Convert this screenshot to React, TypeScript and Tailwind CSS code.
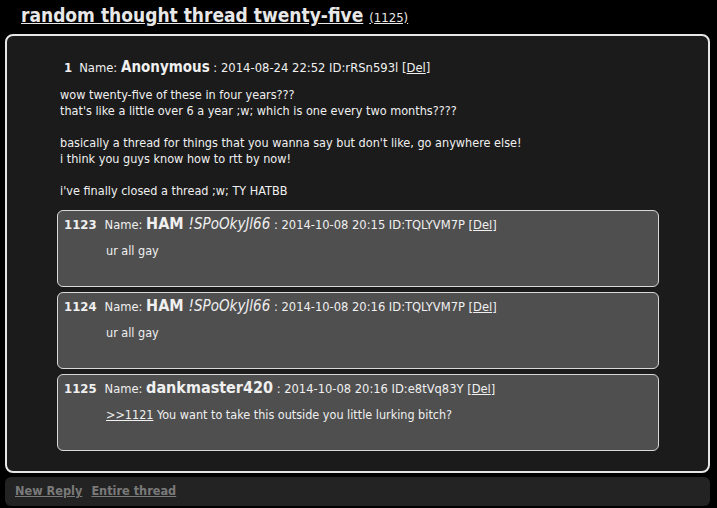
const font = "font-['DejaVu_Sans_Condensed','DejaVu_Sans',sans-serif]";

type Reply = {
  no: number;
  name: string;
  trip?: string;
  date: string;
  id: string;
  body: React.ReactNode;
};

const replies: Reply[] = [
  { no: 1123, name: "HAM", trip: "!SPoOkyJl66", date: "2014-10-08 20:15", id: "TQLYVM7P", body: "ur all gay" },
  { no: 1124, name: "HAM", trip: "!SPoOkyJl66", date: "2014-10-08 20:16", id: "TQLYVM7P", body: "ur all gay" },
  {
    no: 1125,
    name: "dankmaster420",
    date: "2014-10-08 20:16",
    id: "e8tVq83Y",
    body: (
      <>
        <a href="#" className="underline">&gt;&gt;1121</a> You want to take this outside you little lurking bitch?
      </>
    ),
  },
];

function ReplyBox({ r }: { r: Reply }) {
  return (
    <div className="h-[77px] rounded-[6px] border border-[#d8d8d8] bg-[#4f4f4f] pl-[6px] pt-[1px]">
      <div className="flex items-baseline h-[20px] text-[12.8px]">
        <span className="font-bold text-[13px] mr-[8px]">{r.no}</span>
        <span>Name:&nbsp;</span>
        <span className="font-bold text-[16px]">{r.name}</span>
        {r.trip && <span className="italic text-[15px] ml-[5px]">{r.trip}</span>}
        <span>&nbsp;: {r.date} ID:{r.id} [<a href="#" className="underline">Del</a>]</span>
      </div>
      <div className="pl-[42px] pt-[11px] text-[12.5px] leading-[16px]">{r.body}</div>
    </div>
  );
}

export default function App() {
  return (
    <div className={`min-h-screen bg-black text-[#f0f0f0] ${font}`}>
      <h2 className="h-[34px] pl-[21px] pt-[3px] text-[19px] font-bold leading-[24px] text-[#e8e8e8]">
        <a href="#" className="underline">random thought thread twenty-five</a>{" "}
        <a href="#" className="underline text-[13px] font-normal">(1125)</a>
      </h2>

      <div className="ml-[5px] w-[705px] rounded-[8px] border-2 border-[#e6e6e6] bg-[#1b1b1b] pb-[20px]">
        {/* First post */}
        <div className="pt-[20px] pl-[53px]">
          <div className="flex items-baseline h-[20px] pl-[4px] text-[12.9px]">
            <span className="font-bold text-[13px] mr-[7px]">1</span>
            <span>Name:&nbsp;</span>
            <span className="font-bold text-[15px]">Anonymous</span>
            <span>&nbsp;: 2014-08-24 22:52 ID:rRSn593l [<a href="#" className="underline">Del</a>]</span>
          </div>
          <p className="mt-[11px] text-[12.55px] leading-[16px]">
            wow twenty-five of these in four years???<br />
            that's like a little over 6 a year ;w; which is one every two months????<br />
            <br />
            basically a thread for things that you wanna say but don't like, go anywhere else!<br />
            i think you guys know how to rtt by now!<br />
            <br />
            i've finally closed a thread ;w; TY HATBB
          </p>
        </div>

        {/* Replies */}
        <div className="mt-[11px] ml-[50px] w-[602px] flex flex-col gap-[5px]">
          {replies.map((r) => (
            <ReplyBox key={r.no} r={r} />
          ))}
        </div>
      </div>

      <div className="mt-[4px] ml-[5px] w-[705px] h-[29px] rounded-[6px] bg-[#232323] flex items-center gap-[9px] pl-[10px] text-[12.6px] font-bold text-[#7a7a7a]">
        <a href="#" className="underline">New Reply</a>
        <a href="#" className="underline">Entire thread</a>
      </div>
    </div>
  );
}
